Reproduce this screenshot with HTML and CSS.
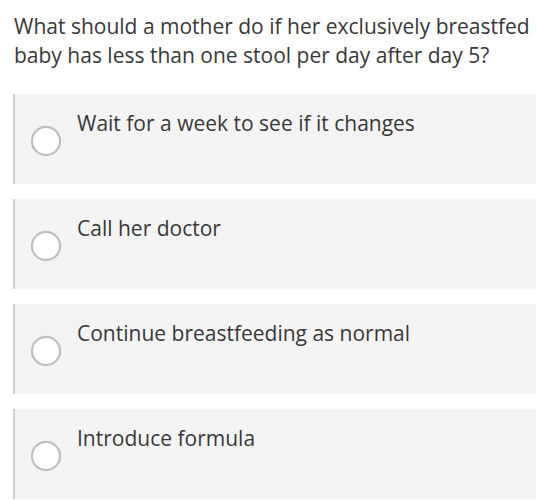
FILE: index.html
```html
<!DOCTYPE html>
<html>
<head>
<meta charset="utf-8">
<link rel="stylesheet" href="styles.css">
</head>
<body>
<div class="quiz">
  <p class="question">What should a mother do if her exclusively breastfed baby has less than one stool per day after day 5?</p>
  <div class="options">
    <div class="option"><span class="radio"></span><span class="label">Wait for a week to see if it changes</span></div>
    <div class="option"><span class="radio"></span><span class="label">Call her doctor</span></div>
    <div class="option"><span class="radio"></span><span class="label">Continue breastfeeding as normal</span></div>
    <div class="option"><span class="radio"></span><span class="label">Introduce formula</span></div>
  </div>
</div>
</body>
</html>
```
FILE: styles.css
```css
html, body {
  margin: 0;
  padding: 0;
  background: #ffffff;
}
.quiz {
  padding: 12px 1px 0 13px;
  font-family: "Open Sans", "Noto Sans", sans-serif;
  color: #383838;
}
.question {
  margin: 0;
  padding-left: 1px;
  font-size: 21px;
  line-height: 29px;
}
.options {
  display: flex;
  flex-direction: column;
  gap: 15px;
  margin-top: 24px;
}
.option {
  display: flex;
  align-items: flex-start;
  height: 90px;
  box-sizing: border-box;
  background: #f4f4f4;
  border-left: 2px solid #cfcfcf;
  padding: 15px 16px 0 16px;
}
.radio {
  flex: none;
  width: 30px;
  height: 30px;
  box-sizing: border-box;
  border: 2px solid #bdbdbd;
  border-radius: 50%;
  background: #ffffff;
  margin-top: 17px;
  box-shadow: 0 0 1px rgba(0,0,0,0.15);
}
.label {
  margin-left: 16px;
  font-size: 21px;
  line-height: 28px;
}
```
